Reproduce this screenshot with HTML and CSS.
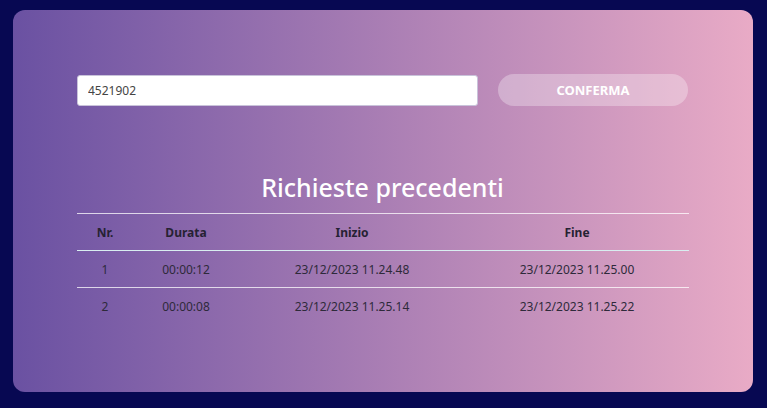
FILE: index.html
```html
<!DOCTYPE html>
<html lang="it">
<head>
  <meta charset="UTF-8">
  <meta name="viewport" content="width=device-width, initial-scale=1.0">
  <title>Richieste</title>
  <link rel="stylesheet" href="styles.css">
</head>
<body>
  <div class="card">
    <form class="search">
      <input type="text" class="code-input" value="4521902">
      <button type="button" class="confirm">CONFERMA</button>
    </form>

    <h2 class="title">Richieste precedenti</h2>

    <table class="history">
      <thead>
        <tr>
          <th class="col-nr">Nr.</th>
          <th class="col-dur">Durata</th>
          <th class="col-start">Inizio</th>
          <th>Fine</th>
        </tr>
      </thead>
      <tbody>
        <tr>
          <td>1</td>
          <td>00:00:12</td>
          <td>23/12/2023 11.24.48</td>
          <td>23/12/2023 11.25.00</td>
        </tr>
        <tr>
          <td>2</td>
          <td>00:00:08</td>
          <td>23/12/2023 11.25.14</td>
          <td>23/12/2023 11.25.22</td>
        </tr>
      </tbody>
    </table>
  </div>
</body>
</html>
```

FILE: styles.css
```css
body {
  font-family: "Noto Sans", "Open Sans", sans-serif;
  background-color: #070852;
  margin: 0;
  padding: 10px 14px 0 13px;
  height: 408px;
  box-sizing: border-box;
}

.card {
  height: 382px;
  border-radius: 12px;
  background: linear-gradient(to right, #6a51a2, #e9abc6);
  padding: 64px 65px 0 64px;
  box-sizing: border-box;
}

.search {
  display: flex;
  align-items: center;
  gap: 20px;
}

.code-input {
  width: 401px;
  height: 31px;
  padding: 0 10px;
  border: 1px solid #c9c3da;
  border-radius: 3px;
  box-sizing: border-box;
  font-family: inherit;
  font-size: 12px;
  color: #444;
  background: #fff;
}

.confirm {
  width: 190px;
  height: 32px;
  border: none;
  border-radius: 16px;
  background-color: rgba(255, 255, 255, 0.3);
  color: #fff;
  font-family: inherit;
  font-weight: bold;
  font-size: 13px;
}

.title {
  margin: 62px 0 7px;
  height: 38px;
  text-align: center;
  color: #fff;
  font-weight: 500;
  font-size: 25px;
  line-height: 38px;
}

.history {
  width: 612px;
  border-collapse: collapse;
  font-size: 12px;
  color: #2e2a3a;
  text-align: center;
}

.history th,
.history td {
  height: 36px;
  padding: 0;
}

.history th {
  font-weight: bold;
  color: #262233;
}

.history thead tr {
  border-top: 1px solid rgba(255, 255, 255, 0.75);
  border-bottom: 1px solid #d8eef0;
}

.history tbody tr + tr {
  border-top: 1px solid rgba(255, 255, 255, 0.75);
}

.col-nr {
  width: 56px;
}

.col-dur {
  width: 106px;
}

.col-start {
  width: 226px;
}
```
